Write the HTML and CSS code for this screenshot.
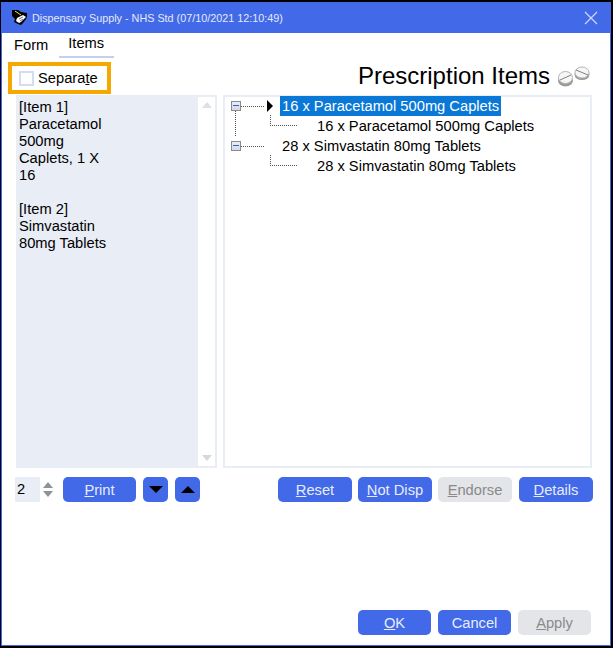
FILE: index.html
```html
<!DOCTYPE html>
<html lang="en">
<head>
<meta charset="utf-8">
<title>Dispensary Supply</title>
<link rel="stylesheet" href="styles.css">
</head>
<body>
<div class="window">
  <header class="titlebar">
    <svg class="app-icon" width="18" height="18" viewBox="0 0 18 18">
      <path d="M1 2h6l3 2 6 1v4l-1 2-3 4-2 2-3-1-4-2 1-3-3-3z" fill="#000"/>
      <path d="M6 10l6-3 3 2-5 5-2 1-3-2z" fill="#fff"/>
      <path d="M4 3l6 4" stroke="#ffe14a" stroke-width="1"/>
      <path d="M8 11l4-2M9 13l3-2" stroke="#777" stroke-width="1"/>
    </svg>
    <span class="title-text">Dispensary Supply - NHS Std (07/10/2021 12:10:49)</span>
    <svg class="close-icon" width="14" height="14" viewBox="0 0 14 14"><path d="M1 1l12 12M13 1L1 13" stroke="#cfd8f8" stroke-width="1.2" fill="none"/></svg>
  </header>
  <nav class="tabs">
    <span class="tab">Form</span>
    <span class="tab tab-active">Items</span>
  </nav>
  <div class="heading-row">
    <label class="separate">
      <span class="checkbox"></span>
      <span>Separa<u>t</u>e</span>
    </label>
    <div class="heading">
      <span class="heading-text">Prescription Items</span>
      <svg class="pills" width="33" height="22" viewBox="0 0 33 22">
        <ellipse cx="7.5" cy="15.5" rx="7.5" ry="6" fill="#9a9a9a"/>
        <ellipse cx="7.5" cy="12.5" rx="7" ry="6" fill="#f6f6f6" stroke="#b5b5b5" stroke-width="1"/>
        <path d="M2 15l11-5" stroke="#808080" stroke-width="1"/>
        <ellipse cx="24" cy="9.5" rx="7.5" ry="5.5" fill="#9a9a9a"/>
        <ellipse cx="24" cy="7.5" rx="7" ry="5.5" fill="#f6f6f6" stroke="#b5b5b5" stroke-width="1"/>
        <path d="M18 5l12 5" stroke="#808080" stroke-width="1"/>
      </svg>
    </div>
  </div>
  <div class="panels">
    <div class="memo">
      <div class="memo-text">[Item 1]<br>Paracetamol<br>500mg<br>Caplets, 1 X<br>16<br><br>[Item 2]<br>Simvastatin<br>80mg Tablets</div>
      <div class="scrollbar">
        <span class="arrow-up"></span>
        <span class="arrow-down"></span>
      </div>
    </div>
    <div class="tree">
      <div class="tree-row">
        <span class="expander"></span><span class="dots-h"></span><span class="pointer"></span><span class="node selected">16 x Paracetamol 500mg Caplets</span>
        <span class="vline"></span>
      </div>
      <div class="tree-row child"><span class="elbow"></span><span class="node">16 x Paracetamol 500mg Caplets</span></div>
      <div class="tree-row">
        <span class="expander"></span><span class="dots-h"></span><span class="pointer-gap"></span><span class="node">28 x Simvastatin 80mg Tablets</span>
      </div>
      <div class="tree-row child"><span class="elbow"></span><span class="node">28 x Simvastatin 80mg Tablets</span></div>
    </div>
  </div>
  <div class="actions">
    <div class="copies">
      <span class="copies-value">2</span>
      <span class="spinner"><span class="spin-up"></span><span class="spin-down"></span></span>
    </div>
    <button class="btn btn-print"><span><u>P</u>rint</span></button>
    <button class="btn btn-icon"><span class="tri-down"></span></button>
    <button class="btn btn-icon"><span class="tri-up"></span></button>
    <span class="spacer"></span>
    <button class="btn btn-wide"><span><u>R</u>eset</span></button>
    <button class="btn btn-wide"><span><u>N</u>ot Disp</span></button>
    <button class="btn btn-wide btn-disabled"><span><u>E</u>ndorse</span></button>
    <button class="btn btn-wide btn-last"><span><u>D</u>etails</span></button>
  </div>
  <div class="footer">
    <button class="btn btn-foot"><span><u>O</u>K</span></button>
    <button class="btn btn-foot">Cancel</button>
    <button class="btn btn-foot btn-disabled"><span><u>A</u>pply</span></button>
  </div>
</div>
</body>
</html>
```
FILE: styles.css
```css
* { box-sizing: border-box; }
html, body { margin: 0; padding: 0; height: 100%; }
body {
  background: #000;
  padding: 2px 2px 2px 1px;
  font-family: "Liberation Sans", Arial, sans-serif;
  font-size: 14.7px;
  color: #000;
  overflow: hidden;
}
.window {
  height: 644px;
  background: #fff;
  border: 1px solid #4169e8;
  border-top: 0;
  display: flex;
  flex-direction: column;
}
.titlebar {
  height: 31px;
  background: #4169e8;
  display: flex;
  align-items: center;
  padding: 0 12px 0 9px;
  color: #e4e9fb;
  font-size: 10.8px;
  flex: none;
}
.app-icon { flex: none; margin-right: 3px; margin-top: -2px; }
.title-text { flex: 1; }
.tabs {
  display: flex;
  height: 26px;
  padding: 0 0 0 2px;
  flex: none;
}
.tab { padding: 4px 10px 0 10px; height: 24px; }
.tab-active {
  padding: 2px 10px 0 9px;
  height: 25px;
  margin-left: 1px;
  border-bottom: 2px solid #c6d0ee;
}
.heading-row {
  display: flex;
  justify-content: space-between;
  align-items: flex-start;
  height: 36px;
  flex: none;
  padding: 3px 19px 0 6px;
}
.separate {
  width: 103px;
  height: 32px;
  border: 4px solid #f5a800;
  display: flex;
  align-items: center;
  padding-left: 7px;
  gap: 4px;
}
.checkbox {
  width: 15px;
  height: 15px;
  border: 2px solid #d3dbf5;
  background: #fff;
  flex: none;
}
.heading { display: flex; align-items: flex-start; gap: 8px; }
.heading-text { font-size: 24px; line-height: 28px; }
.pills { margin-top: 3px; }
.panels {
  height: 373px;
  display: flex;
  padding: 0 18px 0 14px;
  gap: 6px;
  flex: none;
}
.memo {
  width: 201px;
  background: #e9edf6;
  border: 2px solid #e9edf6;
  display: flex;
  flex: none;
}
.memo-text {
  flex: 1;
  padding: 2px 0 0 1px;
  line-height: 17px;
}
.scrollbar {
  width: 17px;
  background: #fff;
  display: flex;
  flex-direction: column;
  justify-content: space-between;
  align-items: center;
  padding: 5px 0;
}
.arrow-up { border: 5px solid transparent; border-top: 0; border-bottom: 6px solid #e0e0e0; }
.arrow-down { border: 5px solid transparent; border-bottom: 0; border-top: 6px solid #d8d8d8; }
.tree {
  flex: 1;
  border: 2px solid #e9edf6;
  padding: 0 0 0 6px;
}
.tree-row {
  height: 20px;
  display: flex;
  align-items: center;
  position: relative;
}
.tree-row:first-child { margin-top: -1px; }
.expander {
  width: 10px;
  height: 10px;
  border: 1px solid #8a8a8a;
  background: linear-gradient(#e9edf6, #d4d9e6);
  position: relative;
  flex: none;
}
.expander::after {
  content: "";
  position: absolute;
  left: 1px;
  top: 3px;
  width: 6px;
  height: 1px;
  background: #3d5fb5;
}
.dots-h { width: 23px; border-top: 1px dotted #555; flex: none; }
.pointer {
  flex: none;
  margin: 0 7px 0 3px;
  border-left: 6px solid #000;
  border-top: 6px solid transparent;
  border-bottom: 6px solid transparent;
}
.pointer-gap { width: 16px; flex: none; }
.node { padding: 0 2px; line-height: 20px; white-space: nowrap; }
.selected { background: #0a78d7; color: #fff; }
.vline {
  position: absolute;
  left: 4px;
  top: 15px;
  height: 25px;
  border-left: 1px dotted #555;
}
.child { padding-left: 40px; }
.elbow {
  width: 27px;
  height: 11px;
  margin: -11px 18px 0 -1px;
  border-left: 1px dotted #555;
  border-bottom: 1px dotted #555;
  flex: none;
}
.actions {
  display: flex;
  align-items: center;
  height: 25px;
  margin-top: 9px;
  padding: 0 17px 0 13px;
  flex: none;
}
.copies { display: flex; align-items: center; width: 48px; flex: none; }
.copies-value { width: 25px; height: 25px; background: #e9edf6; padding: 4px 0 0 2px; }
.spinner { display: flex; flex-direction: column; gap: 3px; margin-left: 3px; }
.spin-up { border: 5px solid transparent; border-top: 0; border-bottom: 6px solid #8e9398; }
.spin-down { border: 5px solid transparent; border-bottom: 0; border-top: 6px solid #8e9398; }
.btn {
  height: 25px;
  border: 0;
  border-radius: 5px;
  background: #4169e8;
  color: #e8edfc;
  font: inherit;
  padding: 0;
  flex: none;
  display: flex;
  align-items: center;
  justify-content: center;
}
.btn-print { width: 73px; }
.btn-icon { width: 25px; margin-left: 7px; }
.spacer { flex: 1; }
.btn-wide { width: 74px; margin-left: 6px; }
.btn-last { margin-left: 7px; }
.btn-disabled { background: #e3e5e8; color: #8a8a8a; }
.tri-down { border: 7px solid transparent; border-bottom: 0; border-top: 7px solid #000; }
.tri-up { border: 7px solid transparent; border-top: 0; border-bottom: 7px solid #000; }
.footer {
  margin-top: auto;
  display: flex;
  justify-content: flex-end;
  gap: 7px;
  padding: 0 19px 10px 0;
  flex: none;
}
.btn-foot { width: 73px; }
```
